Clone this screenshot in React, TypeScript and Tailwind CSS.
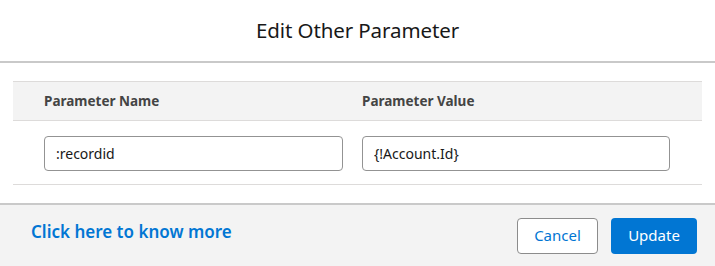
import React from 'react';

export default function App() {
  return (
    <div className="w-[715px] h-[266px] bg-white flex flex-col font-['Noto_Sans',sans-serif]">
      {/* Header */}
      <div className="h-[63px] shrink-0 flex items-center justify-center border-b-2 border-[#c9c9c9]">
        <h2 className="text-[20.5px] text-[#181818] tracking-[-0.1px]">Edit Other Parameter</h2>
      </div>

      {/* Body */}
      <div className="px-[13px] pt-[18px] pb-[18px] shrink-0">
        <div className="border-t border-[#dddbda]">
          <div className="flex h-[39px] items-center bg-[#f3f3f3] border-b border-[#dddbda]">
            <div className="w-[349px] pl-[31px] text-[13.5px] font-bold text-[#444444]">Parameter Name</div>
            <div className="flex-1 text-[13.5px] font-bold text-[#444444]">Parameter Value</div>
          </div>
          <div className="flex pt-[15px] pb-[13px] border-b border-[#dddbda]">
            <div className="w-[349px] pl-[31px]">
              <input
                readOnly
                value=":recordid"
                className="w-[299px] h-[35px] rounded-[4px] border border-[#939393] px-[11px] text-[14px] text-[#181818] outline-none"
              />
            </div>
            <div className="flex-1">
              <input
                readOnly
                value="{!Account.Id}"
                className="w-[308px] h-[35px] rounded-[4px] border border-[#939393] px-[11px] text-[14px] text-[#181818] outline-none"
              />
            </div>
          </div>
        </div>
      </div>

      {/* Footer */}
      <div className="flex-1 flex items-center justify-between bg-[#f3f3f3] border-t-2 border-[#c9c9c9] pl-[31px] pr-[18px]">
        <a className="text-[17px] font-semibold text-[#0176d3] pb-[7px] cursor-pointer">Click here to know more</a>
        <div className="flex gap-[13px]">
          <button className="w-[81px] h-[36px] rounded-[4px] border border-[#8c8c8c] bg-white text-[15px] text-[#0176d3]">Cancel</button>
          <button className="w-[86px] h-[36px] rounded-[4px] bg-[#0176d3] text-[15px] text-white">Update</button>
        </div>
      </div>
    </div>
  );
}
